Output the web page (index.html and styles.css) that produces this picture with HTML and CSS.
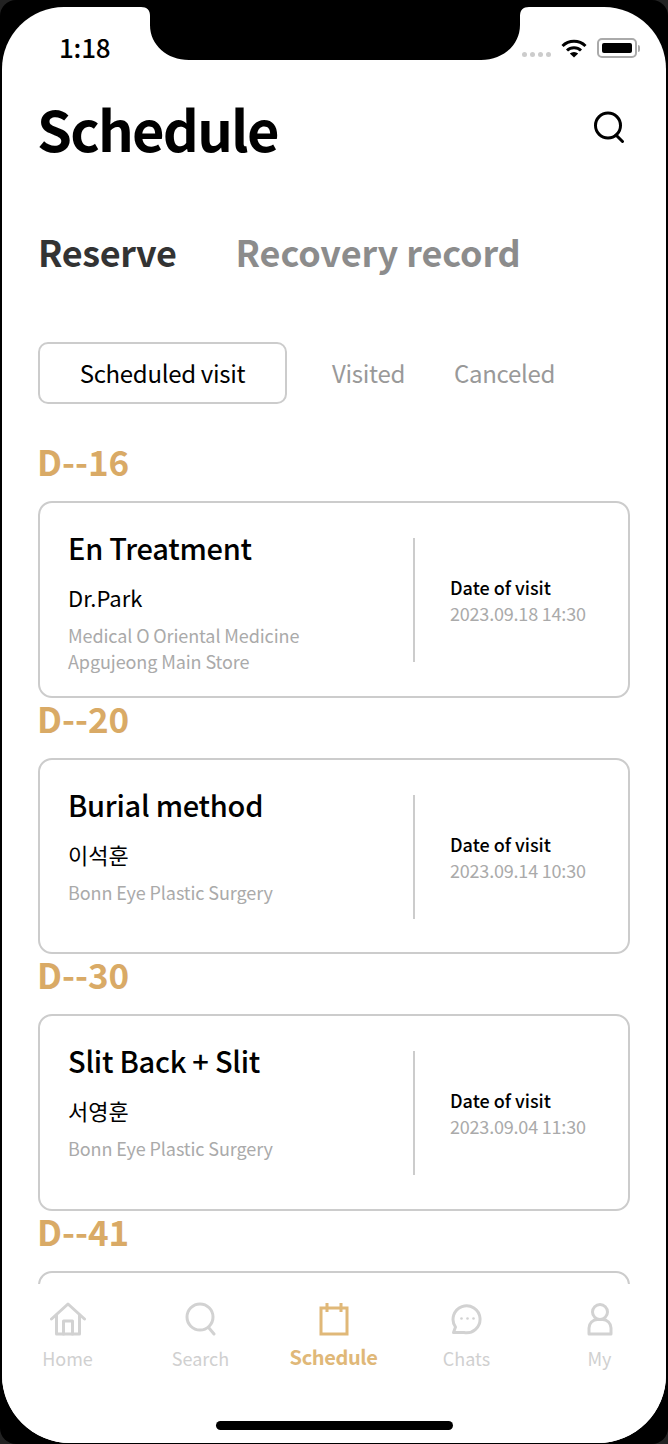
FILE: index.html
```html
<!DOCTYPE html>
<html lang="en">
<head>
    <meta charset="UTF-8">
    <meta name="viewport" content="width=device-width, initial-scale=1.0">
    <title>Schedule</title>
    <link rel="stylesheet" href="styles.css">
</head>
<body>
    <div class="device">
    <div class="screen">
        <svg class="notch" width="388" height="54" viewBox="0 0 388 54">
            <path d="M0 0 H388 C382 0 379 3 379 9 V18 C379 38 362 53 340 53 H48 C26 53 9 38 9 18 V9 C9 3 6 0 0 0 Z" fill="#000"/>
        </svg>
        <div class="status">
            <span class="time">1:18</span>
            <div class="status-icons">
                <div class="signal"><i></i><i></i><i></i><i></i></div>
                <svg class="wifi" width="26" height="19" viewBox="0 0 26 19">
                    <path d="M1.5 7 A16.5 16.5 0 0 1 24.5 7" fill="none" stroke="#000" stroke-width="3"/>
                    <path d="M6 11.5 A10.2 10.2 0 0 1 20 11.5" fill="none" stroke="#000" stroke-width="3"/>
                    <path d="M13 18.5 L8.8 14.6 A6 6 0 0 1 17.2 14.6 Z" fill="#000"/>
                </svg>
                <div class="battery"><div class="battery-fill"></div></div>
                <div class="battery-cap"></div>
            </div>
        </div>

        <header class="header">
            <h1 class="title">Schedule</h1>
            <svg class="search-icon" width="32" height="32" viewBox="0 0 32 32">
                <circle cx="15" cy="14.5" r="12.5" fill="none" stroke="#000" stroke-width="3"/>
                <path d="M23 24 L29.5 30.5" stroke="#000" stroke-width="3" stroke-linecap="round"/>
            </svg>
        </header>

        <div class="tabs">
            <span class="tab active">Reserve</span>
            <span class="tab">Recovery record</span>
        </div>

        <div class="filters">
            <span class="filter active">Scheduled visit</span>
            <span class="filter">Visited</span>
            <span class="filter">Canceled</span>
        </div>

        <main class="list">
            <div class="dday">D--16</div>
            <div class="card">
                <div class="card-left">
                    <div class="card-title">En Treatment</div>
                    <div class="doctor">Dr.Park</div>
                    <div class="clinic">Medical O Oriental Medicine<br>Apgujeong Main Store</div>
                </div>
                <div class="divider"></div>
                <div class="card-right">
                    <div class="date-label">Date of visit</div>
                    <div class="date">2023.09.18 14:30</div>
                </div>
            </div>

            <div class="dday">D--20</div>
            <div class="card">
                <div class="card-left">
                    <div class="card-title">Burial method</div>
                    <div class="doctor">이석훈</div>
                    <div class="clinic">Bonn Eye Plastic Surgery</div>
                </div>
                <div class="divider"></div>
                <div class="card-right">
                    <div class="date-label">Date of visit</div>
                    <div class="date">2023.09.14 10:30</div>
                </div>
            </div>

            <div class="dday">D--30</div>
            <div class="card">
                <div class="card-left">
                    <div class="card-title">Slit Back + Slit</div>
                    <div class="doctor">서영훈</div>
                    <div class="clinic">Bonn Eye Plastic Surgery</div>
                </div>
                <div class="divider"></div>
                <div class="card-right">
                    <div class="date-label">Date of visit</div>
                    <div class="date">2023.09.04 11:30</div>
                </div>
            </div>

            <div class="dday">D--41</div>
            <div class="card"></div>
        </main>

        <nav class="tabbar">
            <div class="nav-item">
                <svg class="nav-icon" width="36" height="34" viewBox="0 0 36 34" fill="none" stroke="#d2d2d2" stroke-width="3" stroke-linecap="round" stroke-linejoin="round">
                    <path d="M1.5 17 L18 2 L34.5 17"/>
                    <path d="M6.5 13 V32 H29.5 V13"/>
                    <path d="M13.5 32 V19 H22.5 V32"/>
                </svg>
                <span class="nav-label">Home</span>
            </div>
            <div class="nav-item">
                <svg class="nav-icon" width="32" height="34" viewBox="0 0 32 34" fill="none" stroke="#d2d2d2" stroke-width="3" stroke-linecap="round">
                    <circle cx="15" cy="15" r="13"/>
                    <path d="M24 26 L29 32"/>
                </svg>
                <span class="nav-label">Search</span>
            </div>
            <div class="nav-item current">
                <svg class="nav-icon" width="30" height="34" viewBox="0 0 30 34" fill="none" stroke="#e0b878" stroke-width="3">
                    <rect x="2" y="6" width="26" height="26"/>
                    <path d="M8 1 V10 M22 1 V10"/>
                </svg>
                <span class="nav-label">Schedule</span>
            </div>
            <div class="nav-item">
                <svg class="nav-icon" width="32" height="34" viewBox="0 0 32 34" fill="none" stroke="#d2d2d2" stroke-width="3">
                    <path d="M4.5 25 A13.5 13.5 0 1 1 13 30.5 H2.5 Z" stroke-linejoin="round"/>
                    <circle cx="10.5" cy="16.5" r="1.3" fill="#d2d2d2" stroke="none"/>
                    <circle cx="16.5" cy="16.5" r="1.3" fill="#d2d2d2" stroke="none"/>
                    <circle cx="22.5" cy="16.5" r="1.3" fill="#d2d2d2" stroke="none"/>
                </svg>
                <span class="nav-label">Chats</span>
            </div>
            <div class="nav-item">
                <svg class="nav-icon" width="26" height="34" viewBox="0 0 26 34" fill="none" stroke="#d2d2d2" stroke-width="3" stroke-linejoin="round">
                    <circle cx="13" cy="10" r="7.5"/>
                    <path d="M2 32 V26 A8.5 8.5 0 0 1 10.5 17.5 H15.5 A8.5 8.5 0 0 1 24 26 V32 Z"/>
                </svg>
                <span class="nav-label">My</span>
            </div>
        </nav>
        <div class="home-indicator"></div>
    </div>
    </div>
</body>
</html>
```

FILE: styles.css
```css
html, body {
    margin: 0;
    padding: 0;
    background-color: #222;
}

body {
    font-family: "Noto Sans CJK KR", "Noto Sans", sans-serif;
    overflow: hidden;
}

.device {
    height: 1444px;
    padding-top: 7px;
    box-sizing: border-box;
    background-color: #000;
    border-radius: 16px;
}

.screen {
    position: relative;
    display: flex;
    flex-direction: column;
    width: 664px;
    height: 1436px;
    margin: 0 2px;
    background-color: #fff;
    border-radius: 62px 62px 68px 68px;
    overflow: hidden;
}

.notch {
    position: absolute;
    top: 0;
    left: 139px;
}

.status {
    display: flex;
    justify-content: space-between;
    align-items: center;
    height: 78px;
    padding: 0 26px 0 57px;
}

.time {
    font-size: 26px;
    font-weight: 500;
    letter-spacing: -0.2px;
    color: #000;
}

.status-icons {
    display: flex;
    align-items: center;
    margin-top: 4px;
}

.signal {
    display: flex;
    gap: 3px;
    margin: 12px 10px 0 0;
}

.signal i {
    width: 5px;
    height: 5px;
    border-radius: 50%;
    background-color: #ccc;
}

.wifi {
    margin-right: 10px;
}

.battery {
    box-sizing: border-box;
    width: 40px;
    height: 20px;
    padding: 3px;
    border: 2px solid #aaa;
    border-radius: 5px;
}

.battery-fill {
    height: 100%;
    background-color: #000;
    border-radius: 2px;
}

.battery-cap {
    width: 2px;
    height: 7px;
    margin-left: 1px;
    background-color: #aaa;
    border-radius: 0 2px 2px 0;
}

.header {
    display: flex;
    justify-content: space-between;
    align-items: center;
    height: 84px;
    padding: 0 41px 0 35px;
}

.title {
    margin: 0;
    font-size: 56px;
    font-weight: 700;
    letter-spacing: -1.75px;
    color: #000;
}

.tabs {
    display: flex;
    gap: 59px;
    height: 50px;
    margin-top: 57px;
    padding-left: 36px;
    line-height: 50px;
}

.tab {
    font-size: 36px;
    font-weight: 700;
    letter-spacing: -0.1px;
    color: #8c8c8c;
}

.tab.active {
    letter-spacing: -0.4px;
    color: #333;
}

.filters {
    display: flex;
    align-items: center;
    height: 62px;
    margin-top: 66px;
    padding-left: 36px;
}

.filter {
    margin: 0 0 2px 49px;
    font-size: 24px;
    letter-spacing: -0.3px;
    color: #999;
}

.filter.active {
    box-sizing: border-box;
    display: flex;
    justify-content: center;
    align-items: center;
    width: 249px;
    height: 62px;
    margin: 0 -4px 0 0;
    padding-bottom: 2px;
    border: 2px solid #ccc;
    border-radius: 10px;
    color: #000;
}

.list {
    flex: 1;
    min-height: 0;
    margin-top: 21px;
    padding: 16px 36px 0;
    overflow: hidden;
}

.dday {
    height: 44px;
    margin: 0 0 16px -1px;
    font-size: 35px;
    font-weight: 700;
    line-height: 40px;
    color: #d9aa66;
}

.card {
    box-sizing: border-box;
    display: flex;
    height: 196.67px;
    border: 2px solid #ccc;
    border-radius: 14px;
}

.card-left {
    box-sizing: border-box;
    width: 373px;
    padding: 24px 0 0 28px;
}

.card-title {
    font-size: 29px;
    font-weight: 500;
    letter-spacing: -0.25px;
    line-height: 40px;
    color: #000;
}

.doctor {
    margin-top: 13px;
    font-size: 22px;
    line-height: 34px;
    color: #000;
}

.clinic {
    margin-top: 8px;
    font-size: 18px;
    letter-spacing: -0.1px;
    line-height: 26px;
    color: #aaa;
}

.divider {
    width: 2px;
    height: 124px;
    margin-top: 35px;
    background-color: #ccc;
}

.card-right {
    display: flex;
    flex-direction: column;
    justify-content: center;
    height: 124px;
    margin-top: 35px;
    padding-left: 35px;
}

.date-label {
    font-size: 18px;
    line-height: 26px;
    font-weight: 500;
    color: #000;
}

.date {
    font-size: 18px;
    letter-spacing: -0.2px;
    line-height: 26px;
    color: #aaa;
}

.tabbar {
    display: grid;
    grid-template-columns: repeat(5, 133px);
    height: 159px;
    box-sizing: border-box;
    margin-left: -1px;
    padding-top: 18px;
    background-color: #fff;
}

.nav-item {
    display: flex;
    flex-direction: column;
    align-items: center;
}

.nav-icon {
    height: 34px;
}

.nav-label {
    margin-top: 8px;
    font-size: 18px;
    line-height: 28px;
    color: #d0d0d0;
}

.nav-item.current .nav-label {
    margin-top: 7px;
    font-size: 20px;
    font-weight: 700;
    letter-spacing: -0.4px;
    color: #e0b878;
}

.home-indicator {
    position: absolute;
    left: 214px;
    bottom: 13px;
    width: 237px;
    height: 9px;
    background-color: #000;
    border-radius: 5px;
}
```
